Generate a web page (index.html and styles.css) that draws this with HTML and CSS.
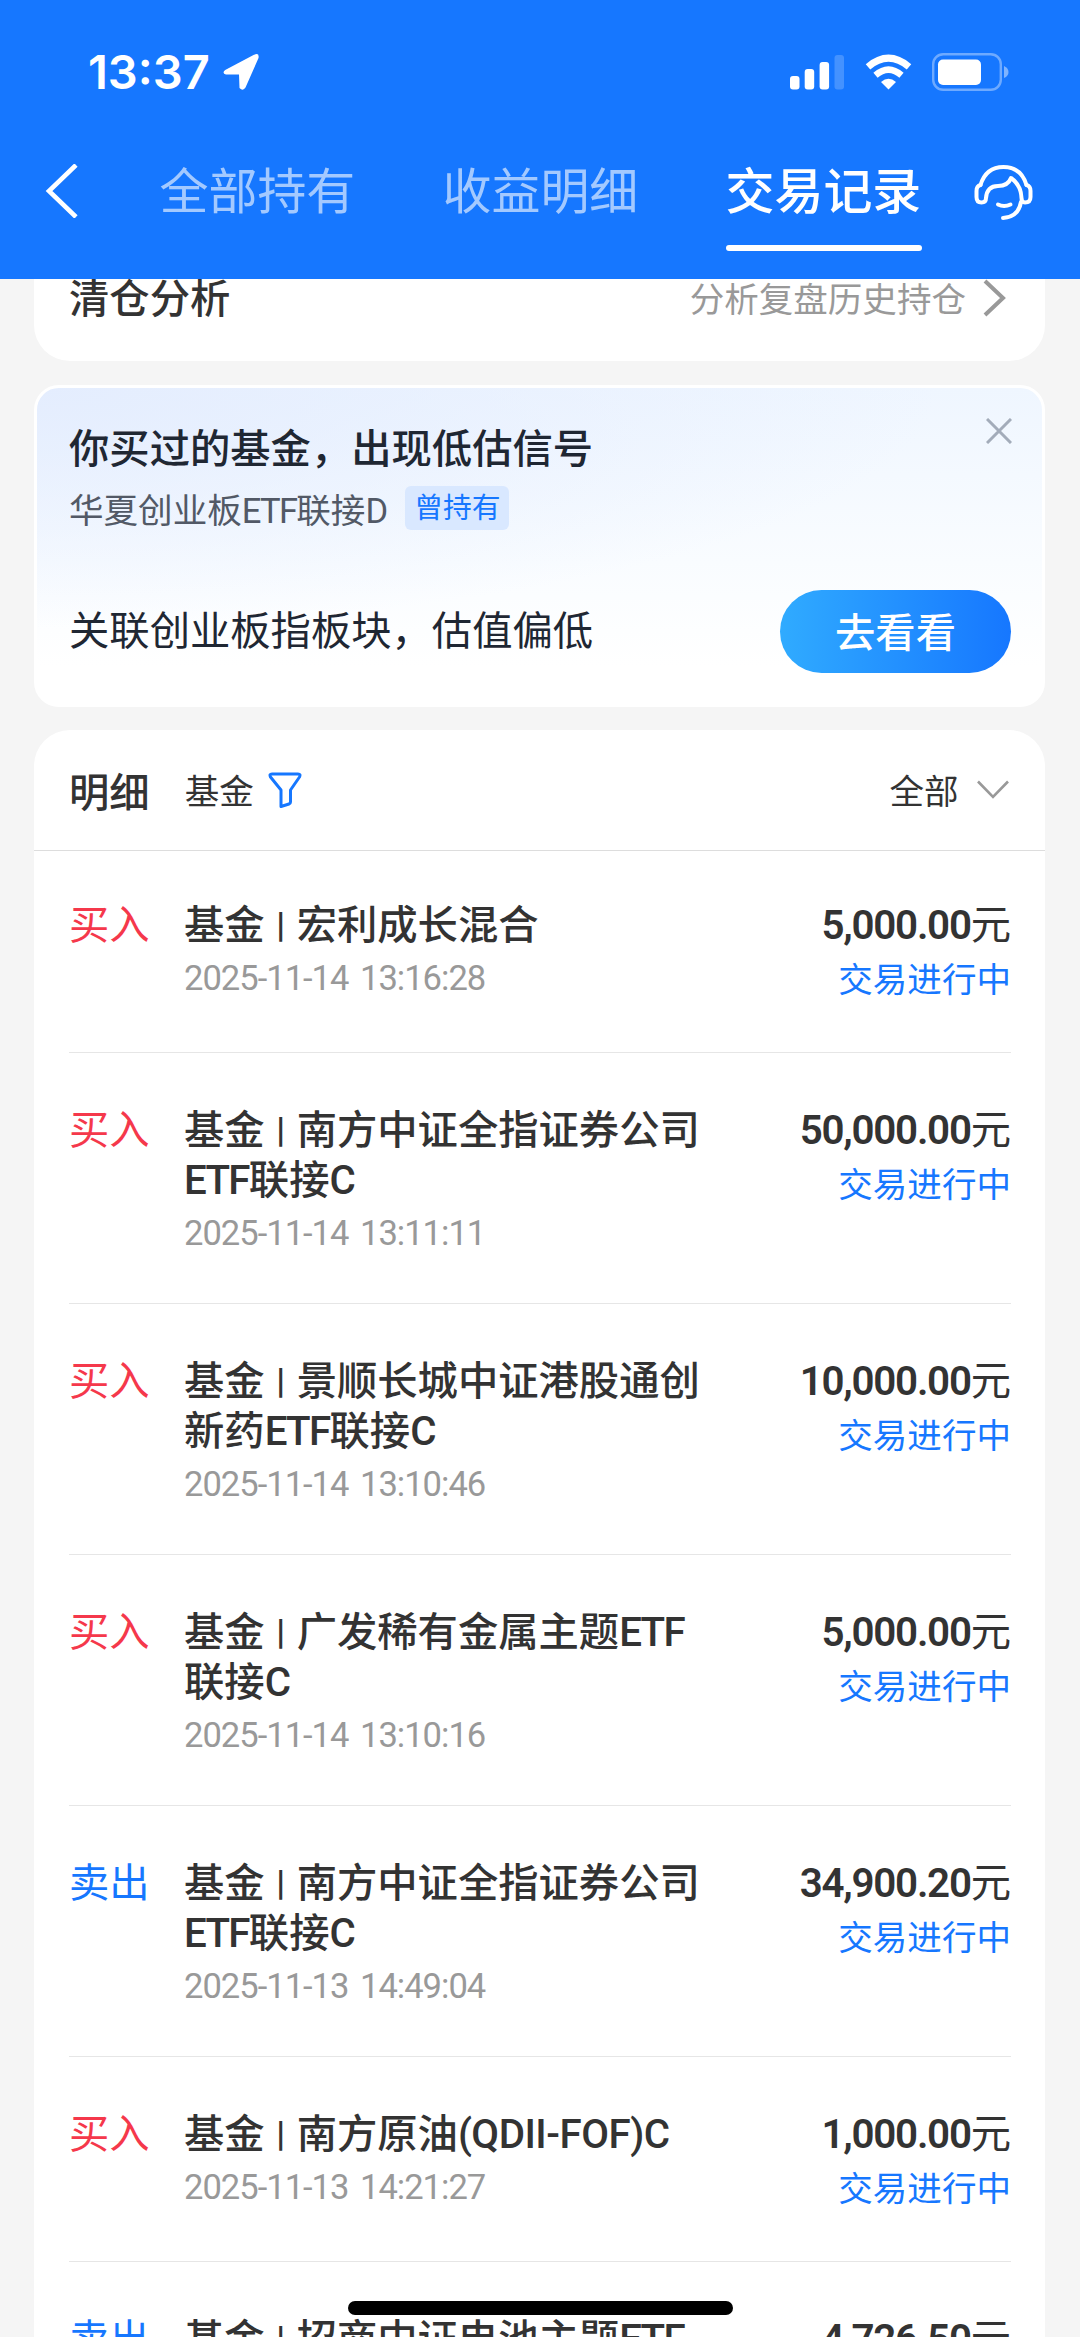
FILE: index.html
```html
<!DOCTYPE html>
<html lang="zh-CN">
<head>
<meta charset="utf-8">
<title>交易记录</title>
<link rel="stylesheet" href="styles.css">
</head>
<body>
<div class="screen">
  <header class="header">
    <div class="status">
      <span class="clock">13:37</span>
      <svg class="locate" width="38" height="38" viewBox="0 0 38 38"><path d="M3.200 17 L32 1.800 Q37.500 -.5 36.500 5 L23.500 34.500 Q21 38.500 17.500 35 L17 21.500 L4 21.500 Q-.5 20 3.200 17Z" fill="#fff"/></svg>
      <svg class="signal" width="55" height="36" viewBox="0 0 55 36" fill="#fff"><rect x="0" y="22" width="9.500" height="13.500" rx="3"/><rect x="14.700" y="15" width="9.500" height="20.500" rx="3"/><rect x="29.600" y="8" width="9.500" height="27.500" rx="3"/><rect x="44.500" y="1" width="9.500" height="34.500" rx="3" opacity=".2"/></svg>
      <svg class="wifi" width="47" height="36" viewBox="0 0 47 36" fill="none" stroke="#fff"><path d="M3 12.800 Q23.500 -4.500 44 12.800" stroke-width="7"/><path d="M10.500 21.200 Q23.500 10 36.500 21.200" stroke-width="6.500"/><path d="M16 28 Q23.500 21.500 31 28 L23.500 35.500Z" fill="#fff" stroke="none"/></svg>
      <svg class="battery" width="77" height="38" viewBox="0 0 77 38" fill="#fff"><rect x="1.200" y="1.200" width="67.600" height="35.600" rx="10" fill="none" stroke="#fff" stroke-width="2.400" opacity=".38"/><rect x="6" y="6.500" width="43" height="25.500" rx="5"/><path d="M72 13 Q76.500 15 76.500 19 T72 25Z" opacity=".45"/></svg>
    </div>
    <nav class="nav">
      <svg class="back" width="34" height="54" viewBox="0 0 34 54"><path d="M31 1 L4 27 L31 53" fill="none" stroke="#fff" stroke-width="4.600"/></svg>
      <div class="tabs">
        <span class="tab">全部持有</span>
        <span class="tab">收益明细</span>
        <span class="tab active">交易记录</span>
      </div>
      <svg class="service" width="62" height="60" viewBox="0 0 62 60" fill="none" stroke="#fff" stroke-width="4" stroke-linecap="round" stroke-linejoin="round"><path d="M7.500 23 Q13 5 30.500 5 Q48 5 53.500 23"/><path d="M7.500 23 Q3.500 24 3.500 29 V35 Q3.500 40.500 8.500 40.500 Q13 40.500 13 36 Q14 24 25 24 Q35 24 38 16 Q48 23 48.500 36 Q48.500 40.500 52 40.500 Q57.500 40.500 57.500 35 V29 Q57.500 24 53.500 23"/><path d="M48 40 Q45 55.500 30 56"/><path d="M25 42.500 Q31 45.500 37.500 42.500"/></svg>
    </nav>
  </header>

  <main class="content">
    <section class="card analysis">
      <span class="card-title">清仓分析</span>
      <span class="hint">分析复盘历史持仓</span>
      <svg width="24" height="38" viewBox="0 0 24 38"><path d="M2 2 L20 19 L2 36" fill="none" stroke="#999" stroke-width="4"/></svg>
    </section>

    <section class="card signal-card">
      <div class="signal-head"><h2>你买过的基金，出现低估信号</h2>
        <svg class="close" width="26" height="26" viewBox="0 0 26 26"><path d="M1 1 L25 25 M25 1 L1 25" stroke="#a3acba" stroke-width="3"/></svg></div>
      <div class="fund"><span>华夏创业板<span class="lat">ETF</span>联接<span class="lat">D</span></span><span class="tag">曾持有</span></div>
      <div class="advice"><span>关联创业板指板块，估值偏低</span><span class="go">去看看</span></div>
    </section>

    <section class="card detail">
      <div class="filters">
        <h2>明细</h2>
        <span class="kind">基金</span>
        <svg class="funnel" width="34" height="36" viewBox="0 0 34 36"><path d="M4 2 H30 Q33 2 31.500 5 L22.500 18 V30 Q22.500 31.500 21 32 L13 34.500 V18 L2.500 5 Q1 2 4 2Z" fill="none" stroke="#1677ff" stroke-width="3" stroke-linejoin="round"/></svg>
        <span class="all">全部</span>
        <svg class="down" width="32" height="20" viewBox="0 0 32 20"><path d="M1 1.500 L16 17 L31 1.500" fill="none" stroke="#999" stroke-width="2.600"/></svg>
      </div>
      <ul class="records">
        <li class="record"><span class="side buy">买入</span><div class="info"><p class="name">基金<i>|</i>宏利成长混合</p><time>2025-11-14 13:16:28</time></div><div class="result"><p class="amount"><b>5,000.00</b>元</p><p class="state">交易进行中</p></div></li>
        <li class="record"><span class="side buy">买入</span><div class="info"><p class="name">基金<i>|</i>南方中证全指证券公司<br><span class="lat">ETF</span>联接<span class="lat">C</span></p><time>2025-11-14 13:11:11</time></div><div class="result"><p class="amount"><b>50,000.00</b>元</p><p class="state">交易进行中</p></div></li>
        <li class="record"><span class="side buy">买入</span><div class="info"><p class="name">基金<i>|</i>景顺长城中证港股通创<br>新药<span class="lat">ETF</span>联接<span class="lat">C</span></p><time>2025-11-14 13:10:46</time></div><div class="result"><p class="amount"><b>10,000.00</b>元</p><p class="state">交易进行中</p></div></li>
        <li class="record"><span class="side buy">买入</span><div class="info"><p class="name">基金<i>|</i>广发稀有金属主题<span class="lat">ETF</span><br>联接<span class="lat">C</span></p><time>2025-11-14 13:10:16</time></div><div class="result"><p class="amount"><b>5,000.00</b>元</p><p class="state">交易进行中</p></div></li>
        <li class="record"><span class="side sell">卖出</span><div class="info"><p class="name">基金<i>|</i>南方中证全指证券公司<br><span class="lat">ETF</span>联接<span class="lat">C</span></p><time>2025-11-13 14:49:04</time></div><div class="result"><p class="amount"><b>34,900.20</b>元</p><p class="state">交易进行中</p></div></li>
        <li class="record"><span class="side buy">买入</span><div class="info"><p class="name">基金<i>|</i>南方原油<span class="lat-wide">(QDII-FOF)C</span></p><time>2025-11-13 14:21:27</time></div><div class="result"><p class="amount"><b>1,000.00</b>元</p><p class="state">交易进行中</p></div></li>
        <li class="record"><span class="side sell">卖出</span><div class="info"><p class="name">基金<i>|</i>招商中证电池主题<span class="lat">ETF</span></p></div><div class="result"><p class="amount"><b>4,726.50</b>元</p></div></li>
      </ul>
    </section>
  </main>
  <div class="home-bar"></div>
</div>
</body>
</html>
```
FILE: styles.css
```css
* { box-sizing: border-box; }
body, h2, p, ul { margin: 0; padding: 0; }
body { background: #f5f5f5; font-family: Roboto, "Noto Sans CJK SC", sans-serif; font-size: 40.32px; color: #333; }
svg { display: block; flex: none; }
span, p, h2 { white-space: nowrap; }
h2 { font-size: 40.32px; font-weight: 500; }
.screen { position: relative; height: 2337px; overflow: hidden; display: flex; flex-direction: column; }

/* header */
.header { height: 279px; flex: none; background: #1677ff; color: #fff; display: flex; flex-direction: column; }
.status { height: 144px; padding: 0 71px 0 88px; display: flex; align-items: center; }
.clock { font: 600 47px/56px Inter, sans-serif; letter-spacing: 0; width: 134px; }
.signal { margin-left: auto; }
.wifi { margin-left: 20px; }
.battery { margin-left: 20px; }
.nav { height: 135px; padding: 0 45px; display: flex; align-items: flex-start; }
.back { margin-top: 20px; }
.tabs { display: flex; gap: 87px; margin-left: 80.500px; }
.tab { width: 196px; height: 107px; padding-top: 14px; font-size: 48.960px; line-height: 70px; color: #a3c9ff; }
.active { color: #fff; font-weight: 500; position: relative; }
.active::after { content: ""; position: absolute; left: 0; top: 101px; width: 196px; height: 6px; border-radius: 3px; background: #fff; }
.service { margin: 18px 0 0 51px; }

/* cards */
.content { padding: 0 35px 0 34px; display: flex; flex-direction: column; flex: none; }
.card { background: #fff; }
.analysis { height: 82px; padding: 0 38px 0 35px; border-radius: 0 0 36px 36px; display: flex; align-items: flex-start; line-height: 42px; }
.card-title { font-weight: 500; }
.hint { margin-left: auto; margin-right: 17px; font-size: 34.560px; color: #999; }

.signal-card { height: 322px; margin-top: 24px; padding: 33px 31px 0 32px; border: 3px solid #fff; border-radius: 25px; background: radial-gradient(ellipse 900px 240px at 0 0, #e4edfe, rgba(235,244,255,0)), linear-gradient(#eff6ff, #f9fcff 55%, #fff 88%); color: #1f2733; }
.signal-head { display: flex; justify-content: space-between; line-height: 57px; height: 56px; }
.close { margin: -3px -1px 0 0; }
.fund { display: flex; gap: 19px; align-items: center; height: 61px; font-size: 34.560px; color: #525966; }
.tag { width: 104px; height: 44px; text-align: center; font-size: 28.800px; line-height: 45px; border-radius: 6px; background: #d9e8ff; color: #1677ff; }
.advice { display: flex; justify-content: space-between; align-items: center; margin-top: 52px; height: 83px; line-height: 46px; }
.go { width: 231px; height: 83px; border-radius: 42px; text-align: center; line-height: 87px; font-weight: 500; color: #fff; background: linear-gradient(90deg, #30abff, #1677ff); }

.detail { margin-top: 23px; border-radius: 36px 36px 0 0; }
.filters { height: 121px; padding: 0 36.500px 2px 35px; display: flex; align-items: center; border-bottom: 1px solid #ddd; }
.kind { margin-left: 35px; font-size: 34.560px; }
.funnel { margin: 2px 0 0 14px; }
.all { margin-left: auto; font-size: 34.560px; }
.down { margin: 2px 0 0 18px; }

/* records */
.records { list-style: none; padding: 0 34px 0 35px; }
.record { display: flex; padding: 53px 0 47px; border-bottom: 1px solid #e6e6e6; line-height: 50px; }
.record:first-child { padding: 50px 0 47px; }
.side { width: 115px; }
.buy { color: #f5384b; }
.sell { color: #1677ff; }
.name { font-weight: 500; }
.name i { display: inline-block; width: 32px; text-align: center; font-style: normal; font-weight: 700; font-size: 35px; line-height: 30px; vertical-align: 2px; }
.lat { letter-spacing: -1.700px; }
.lat-wide { letter-spacing: -.5px; }
time { display: block; margin-top: 2px; height: 48px; font-size: 34.560px; letter-spacing: -1px; word-spacing: 4px; color: #999; }
.result { margin-left: auto; text-align: right; height: 104px; }
.amount b { font-weight: 600; letter-spacing: -1.250px; }
.state { font-size: 34.560px; line-height: 58px; color: #1677ff; }

.home-bar { position: absolute; left: 348px; top: 2301px; width: 385px; height: 14px; border-radius: 7px; background: #000; }
```
